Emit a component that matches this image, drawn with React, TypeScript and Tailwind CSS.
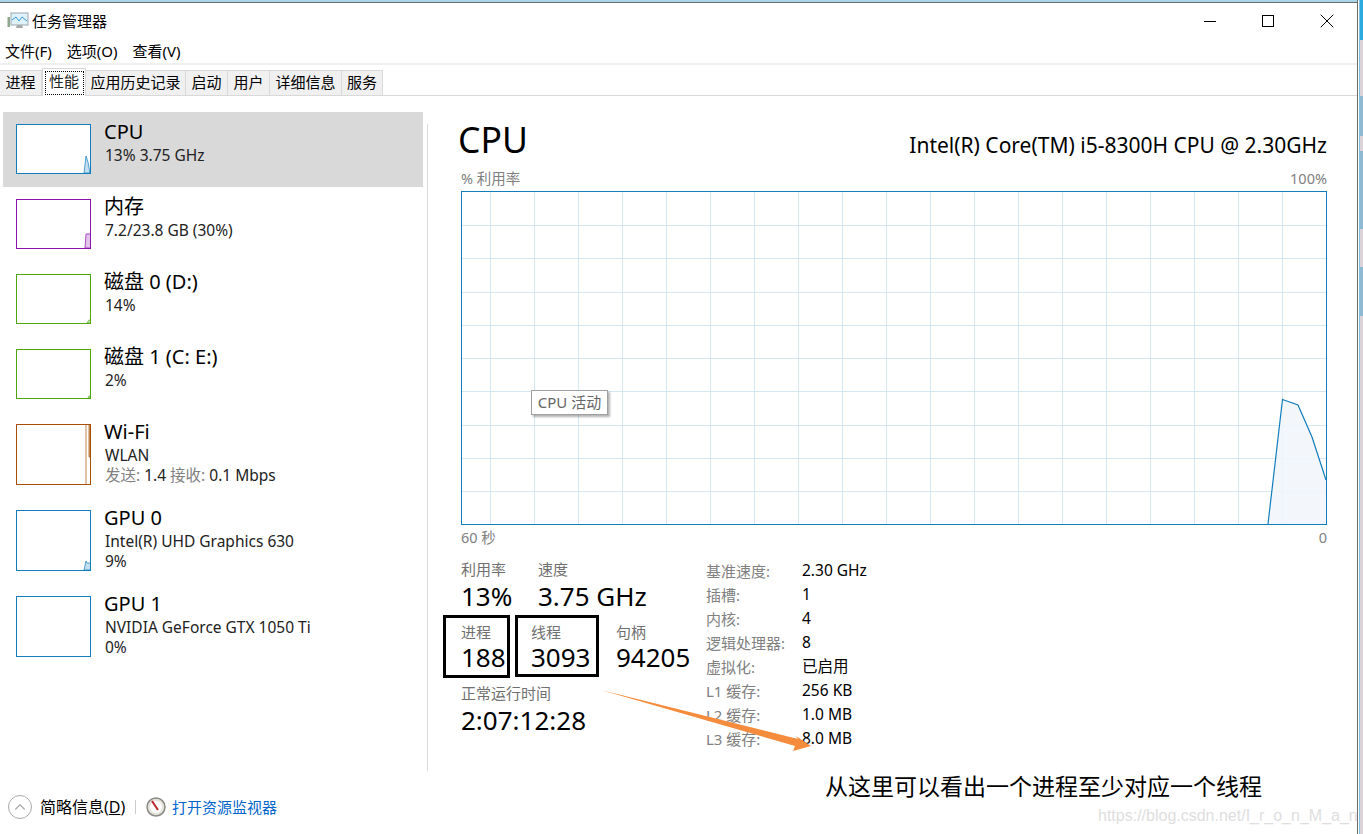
import { X, ChevronUp } from "lucide-react";

const tabs = [
  { label: "进程", w: "w-[42px]" },
  { label: "性能", w: "w-[44px]", active: true },
  { label: "应用历史记录", w: "w-[100px]" },
  { label: "启动", w: "w-[42px]" },
  { label: "用户", w: "w-[42px]" },
  { label: "详细信息", w: "w-[72px]" },
  { label: "服务", w: "w-[41px]" },
];

const devices = [
  {
    name: "CPU",
    lines: ["13% 3.75 GHz"],
    color: "#117dbb",
    h: "h-[50px]",
    height: 50,
    selected: true,
    spark: "M68 49 L70 32 L72 38 L74 49 Z",
  },
  {
    name: "内存",
    lines: ["7.2/23.8 GB (30%)"],
    color: "#8b12ae",
    h: "h-[50px]",
    height: 50,
    spark: "M69 49 L70 35 L75 35 L75 49 Z",
  },
  { name: "磁盘 0 (D:)", lines: ["14%"], color: "#4da60c", h: "h-[50px]", height: 50, spark: "M71 49 L73 46 L75 46 L75 49 Z" },
  { name: "磁盘 1 (C: E:)", lines: ["2%"], color: "#4da60c", h: "h-[50px]", height: 50, spark: "M72 49 L73 47 L75 47 L75 49 Z" },
  { name: "Wi-Fi", lines: ["WLAN"], wifi: true, color: "#a74f01", h: "h-[61px]", height: 61, spark: "M70 0 L70 61 M73 0 L73 33 L74 33 L74 0 Z" },
  { name: "GPU 0", lines: ["Intel(R) UHD Graphics 630", "9%"], color: "#117dbb", h: "h-[61px]", height: 61, spark: "M68 60 L70 51 L71 53 L75 53 L75 60 Z" },
  { name: "GPU 1", lines: ["NVIDIA GeForce GTX 1050 Ti", "0%"], color: "#117dbb", h: "h-[61px]", height: 61, spark: "" },
];

const specs = [
  ["基准速度:", "2.30 GHz"],
  ["插槽:", "1"],
  ["内核:", "4"],
  ["逻辑处理器:", "8"],
  ["虚拟化:", "已启用"],
  ["L1 缓存:", "256 KB"],
  ["L2 缓存:", "1.0 MB"],
  ["L3 缓存:", "8.0 MB"],
];

const gridX = Array.from({ length: 19 }, (_, i) => 29.5 + i * 44);
const gridY = Array.from({ length: 9 }, (_, i) => Math.round(34 + i * 33.25) + 0.5);

const Stat = ({ label, value, className, compact }: { label: string; value: string; className?: string; compact?: boolean }) => (
  <div className={className}>
    <div className="h-[20px] text-[15px] leading-[20px] text-[#707070]">{label}</div>
    <div className={`${compact ? "h-[30px] leading-[30px]" : "h-[34px] leading-[34px]"} text-[26px] text-black`}>{value}</div>
  </div>
);

const App = () => {
  return (
    <div className="relative flex h-[834px] w-[1363px] overflow-hidden bg-white font-['Noto_Sans','Noto_Sans_CJK_SC',sans-serif] text-black">
      <div className="flex h-full w-[1358px] flex-col border-r border-[#6b6b6b]">
        <div className="h-[2px] bg-[#a9d6ea]" />
        <div className="h-px bg-[#6b6b6b]" />

        {/* title bar */}
        <div className="flex h-[36px] items-center">
          <svg className="ml-[7px] h-[20px] w-[22px]" viewBox="0 0 22 20">
            <rect x="0.5" y="6" width="2.5" height="10" fill="#8fa68f" />
            <rect x="4" y="2" width="17" height="12" fill="#dff1fa" stroke="#9aa6ad" />
            <path d="M5 9 L9 6 L12 10 L15 6 L20 10" fill="none" stroke="#3a9ad9" strokeWidth="1" />
            <path d="M10 14 L15 14 L16 17 L9 17 Z" fill="#a8a8a8" />
          </svg>
          <span className="ml-[3px] text-[15px]">任务管理器</span>
          <div className="ml-auto flex items-center">
            <div className="mr-[46px] h-px w-[12px] bg-black" />
            <div className="mr-[41px] h-[12px] w-[12px] border border-black" />
            <X className="mr-[18px] h-[24px] w-[24px]" strokeWidth={1} />
          </div>
        </div>

        {/* menu */}
        <div className="flex h-[24px] items-center gap-[15px] pl-[5px] pt-px text-[15px]">
          <span>文件(F)</span>
          <span>选项(O)</span>
          <span>查看(V)</span>
        </div>
        <div className="h-[2px] bg-[#f0f0f0]" />

        {/* tabs */}
        <div className="flex h-[31px] items-end border-b border-[#d9d9d9]">
          {tabs.map((t) =>
            t.active ? (
              <div key={t.label} className={`${t.w} -mb-px flex h-[28px] items-center justify-center border border-b-0 border-[#d9d9d9] bg-white`}>
                <span className="flex h-[24px] w-[39px] items-center justify-center border border-dotted border-black pb-[3px] text-[15px] text-[#222]">{t.label}</span>
              </div>
            ) : (
              <div key={t.label} className={`${t.w} flex h-[25px] items-center justify-center border-r border-t border-[#d9d9d9] bg-[#f0f0f0] pb-px text-[15px]`}>
                {t.label}
              </div>
            )
          )}
        </div>

        <div className="flex flex-1">
          {/* sidebar */}
          <div className="w-[423px] pl-[3px] pt-[16px]">
            {devices.map((d) => (
              <div key={d.name} className={`flex pb-[13px] pl-[13px] pt-[12px] ${d.selected ? "bg-[#d9d9d9]" : ""}`}>
                <svg className={`${d.h} w-[75px] bg-white`} viewBox={`0 0 75 ${d.height}`}>
                  {d.spark && <path d={d.spark} fill={d.color} fillOpacity="0.25" stroke={d.color} strokeWidth="0.7" />}
                  <rect x="0.5" y="0.5" width="74" height={d.height - 1} fill="none" stroke={d.color} />
                </svg>
                <div className="-mt-[5px] ml-[14px]">
                  <div className="-ml-px h-[26px] text-[20px] leading-[26px]">{d.name}</div>
                  {d.lines.map((l) => (
                    <div key={l} className="h-[20px] text-[15.5px] leading-[20px] text-[#222]">{l}</div>
                  ))}
                  {d.wifi && (
                    <div className="h-[20px] text-[15.5px] leading-[20px] text-[#222]">
                      <span className="text-[#808080]">发送:</span> 1.4 <span className="text-[#808080]">接收:</span> 0.1 Mbps
                    </div>
                  )}
                </div>
              </div>
            ))}
          </div>

          <div className="ml-[4px] mt-[28px] h-[647px] w-px bg-[#d9d9d9]" />

          {/* detail */}
          <div className="flex-1 pl-[33px] pr-[30px] pt-[20px]">
            <div className="flex h-[46px] items-center justify-between">
              <span className="-ml-[3px] text-[35.5px] leading-[46px]">CPU</span>
              <span className="mt-[14px] text-[21px]">Intel(R) Core(TM) i5-8300H CPU @ 2.30GHz</span>
            </div>
            <div className="mt-[7px] flex h-[20px] items-center justify-between text-[14.5px] text-[#808080]">
              <span>% 利用率</span>
              <span>100%</span>
            </div>
            <div className="relative mt-[2px] h-[334px] w-[866px]">
              <svg className="h-full w-full" viewBox="0 0 866 334">
                {gridX.map((x) => (
                  <line key={x} x1={x} x2={x} y1="0" y2="334" stroke="#d5e7f3" />
                ))}
                {gridY.map((y) => (
                  <line key={y} x1="0" x2="866" y1={y} y2={y} stroke="#d5e7f3" />
                ))}
                <path d="M807 333 L821.5 208.5 L837 214 L851 246 L865 289 L865 333 Z" fill="#f1f6fa" fillOpacity="0.85" stroke="none" />
                <path d="M807 333 L821.5 208.5 L837 214 L851 246 L865 289" fill="none" stroke="#117dbb" strokeWidth="1.2" />
                <rect x="0.5" y="0.5" width="865" height="333" fill="none" stroke="#117dbb" />
              </svg>
              <div className="absolute left-[70px] top-[199px] flex h-[25px] w-[77px] items-center justify-center border border-[#a0a0a0] bg-white text-[15px] text-[#666] shadow-[2px_2px_2px_rgba(0,0,0,0.3)]">
                CPU 活动
              </div>
            </div>
            <div className="flex h-[26px] items-center justify-between text-[14.5px] text-[#808080]">
              <span>60 秒</span>
              <span>0</span>
            </div>

            {/* stats */}
            <div className="mt-[8px] flex">
              <div className="w-[245px]">
                <div className="flex h-[63px]">
                  <Stat label="利用率" value="13%" className="w-[77px]" />
                  <Stat label="速度" value="3.75 GHz" />
                </div>
                <div className="flex h-[61px]">
                  <Stat label="进程" value="188" className="w-[70px]" compact />
                  <Stat label="线程" value="3093" className="w-[85px]" compact />
                  <Stat label="句柄" value="94205" compact />
                </div>
                <Stat label="正常运行时间" value="2:07:12:28" />
              </div>
              <div className="flex flex-col">
                {specs.map(([k, v]) => (
                  <div key={k} className="flex h-[24px] items-center">
                    <span className="w-[96px] text-[15px] text-[#808080]">{k}</span>
                    <span className="text-[15.5px]">{v}</span>
                  </div>
                ))}
              </div>
            </div>
          </div>
        </div>

        {/* footer */}
        <div className="flex h-[52px] items-center pb-[2px] pl-[8px]">
          <div className="flex h-[24px] w-[24px] items-center justify-center rounded-full border border-[#aaa]">
            <ChevronUp className="h-[18px] w-[18px] text-[#aaa]" strokeWidth={1.5} />
          </div>
          <span className="ml-[8px] w-[95px] text-[16px]">
            简略信息(<span className="underline">D</span>)
          </span>
          <div className="h-[14px] w-px bg-[#ccc]" />
          <svg className="ml-[10px] h-[20px] w-[20px]" viewBox="0 0 20 20">
            <circle cx="10" cy="10" r="9" fill="#e6e3dc" stroke="#8a8a85" strokeWidth="1.5" />
            <circle cx="10" cy="10" r="6" fill="#fff" />
            <path d="M6 4 L12 13" stroke="#c0242a" strokeWidth="2" />
          </svg>
          <span className="ml-[6px] text-[15px] text-[#0066cc]">打开资源监视器</span>
        </div>
      </div>

      {/* desktop peeking out on the right */}
      <div className="ml-px flex h-full flex-1 flex-col border-l border-[#7cc0de] bg-[#dcd3d8]">
        <div className="h-[40px] bg-[#2baae0]" />
        <div className="mt-[56px] h-[40px] bg-[#8fb8d3]" />
        <div className="mt-[15px] h-[78px] bg-[#8fb8d3]" />
        <div className="mt-[38px] h-[49px] bg-[#8fb8d3]" />
      </div>

      {/* annotations drawn on top of the screenshot */}
      <div className="absolute left-[443px] top-[615px] h-[63px] w-[67px] border-[3px] border-black" />
      <div className="absolute left-[515px] top-[615px] h-[62px] w-[84px] border-[3px] border-black" />
      <svg className="absolute left-[600px] top-[688px] h-[66px] w-[214px]" viewBox="600 688 214 66">
        <path d="M601 690 L798 739 L796 736 L811 746 L793 751 L795 746 Z" fill="#f58b3c" />
      </svg>
      <div className="absolute left-[825px] top-[770px] text-[23px] leading-[32px]">从这里可以看出一个进程至少对应一个线程</div>
      <div className="absolute left-[1098px] top-[806px] font-['Liberation_Sans',sans-serif] text-[16px] leading-[20px] text-[#dedede]">
        https://blog.csdn.net/I_r_o_n_M_a_n
      </div>
    </div>
  );
};

export default App;
